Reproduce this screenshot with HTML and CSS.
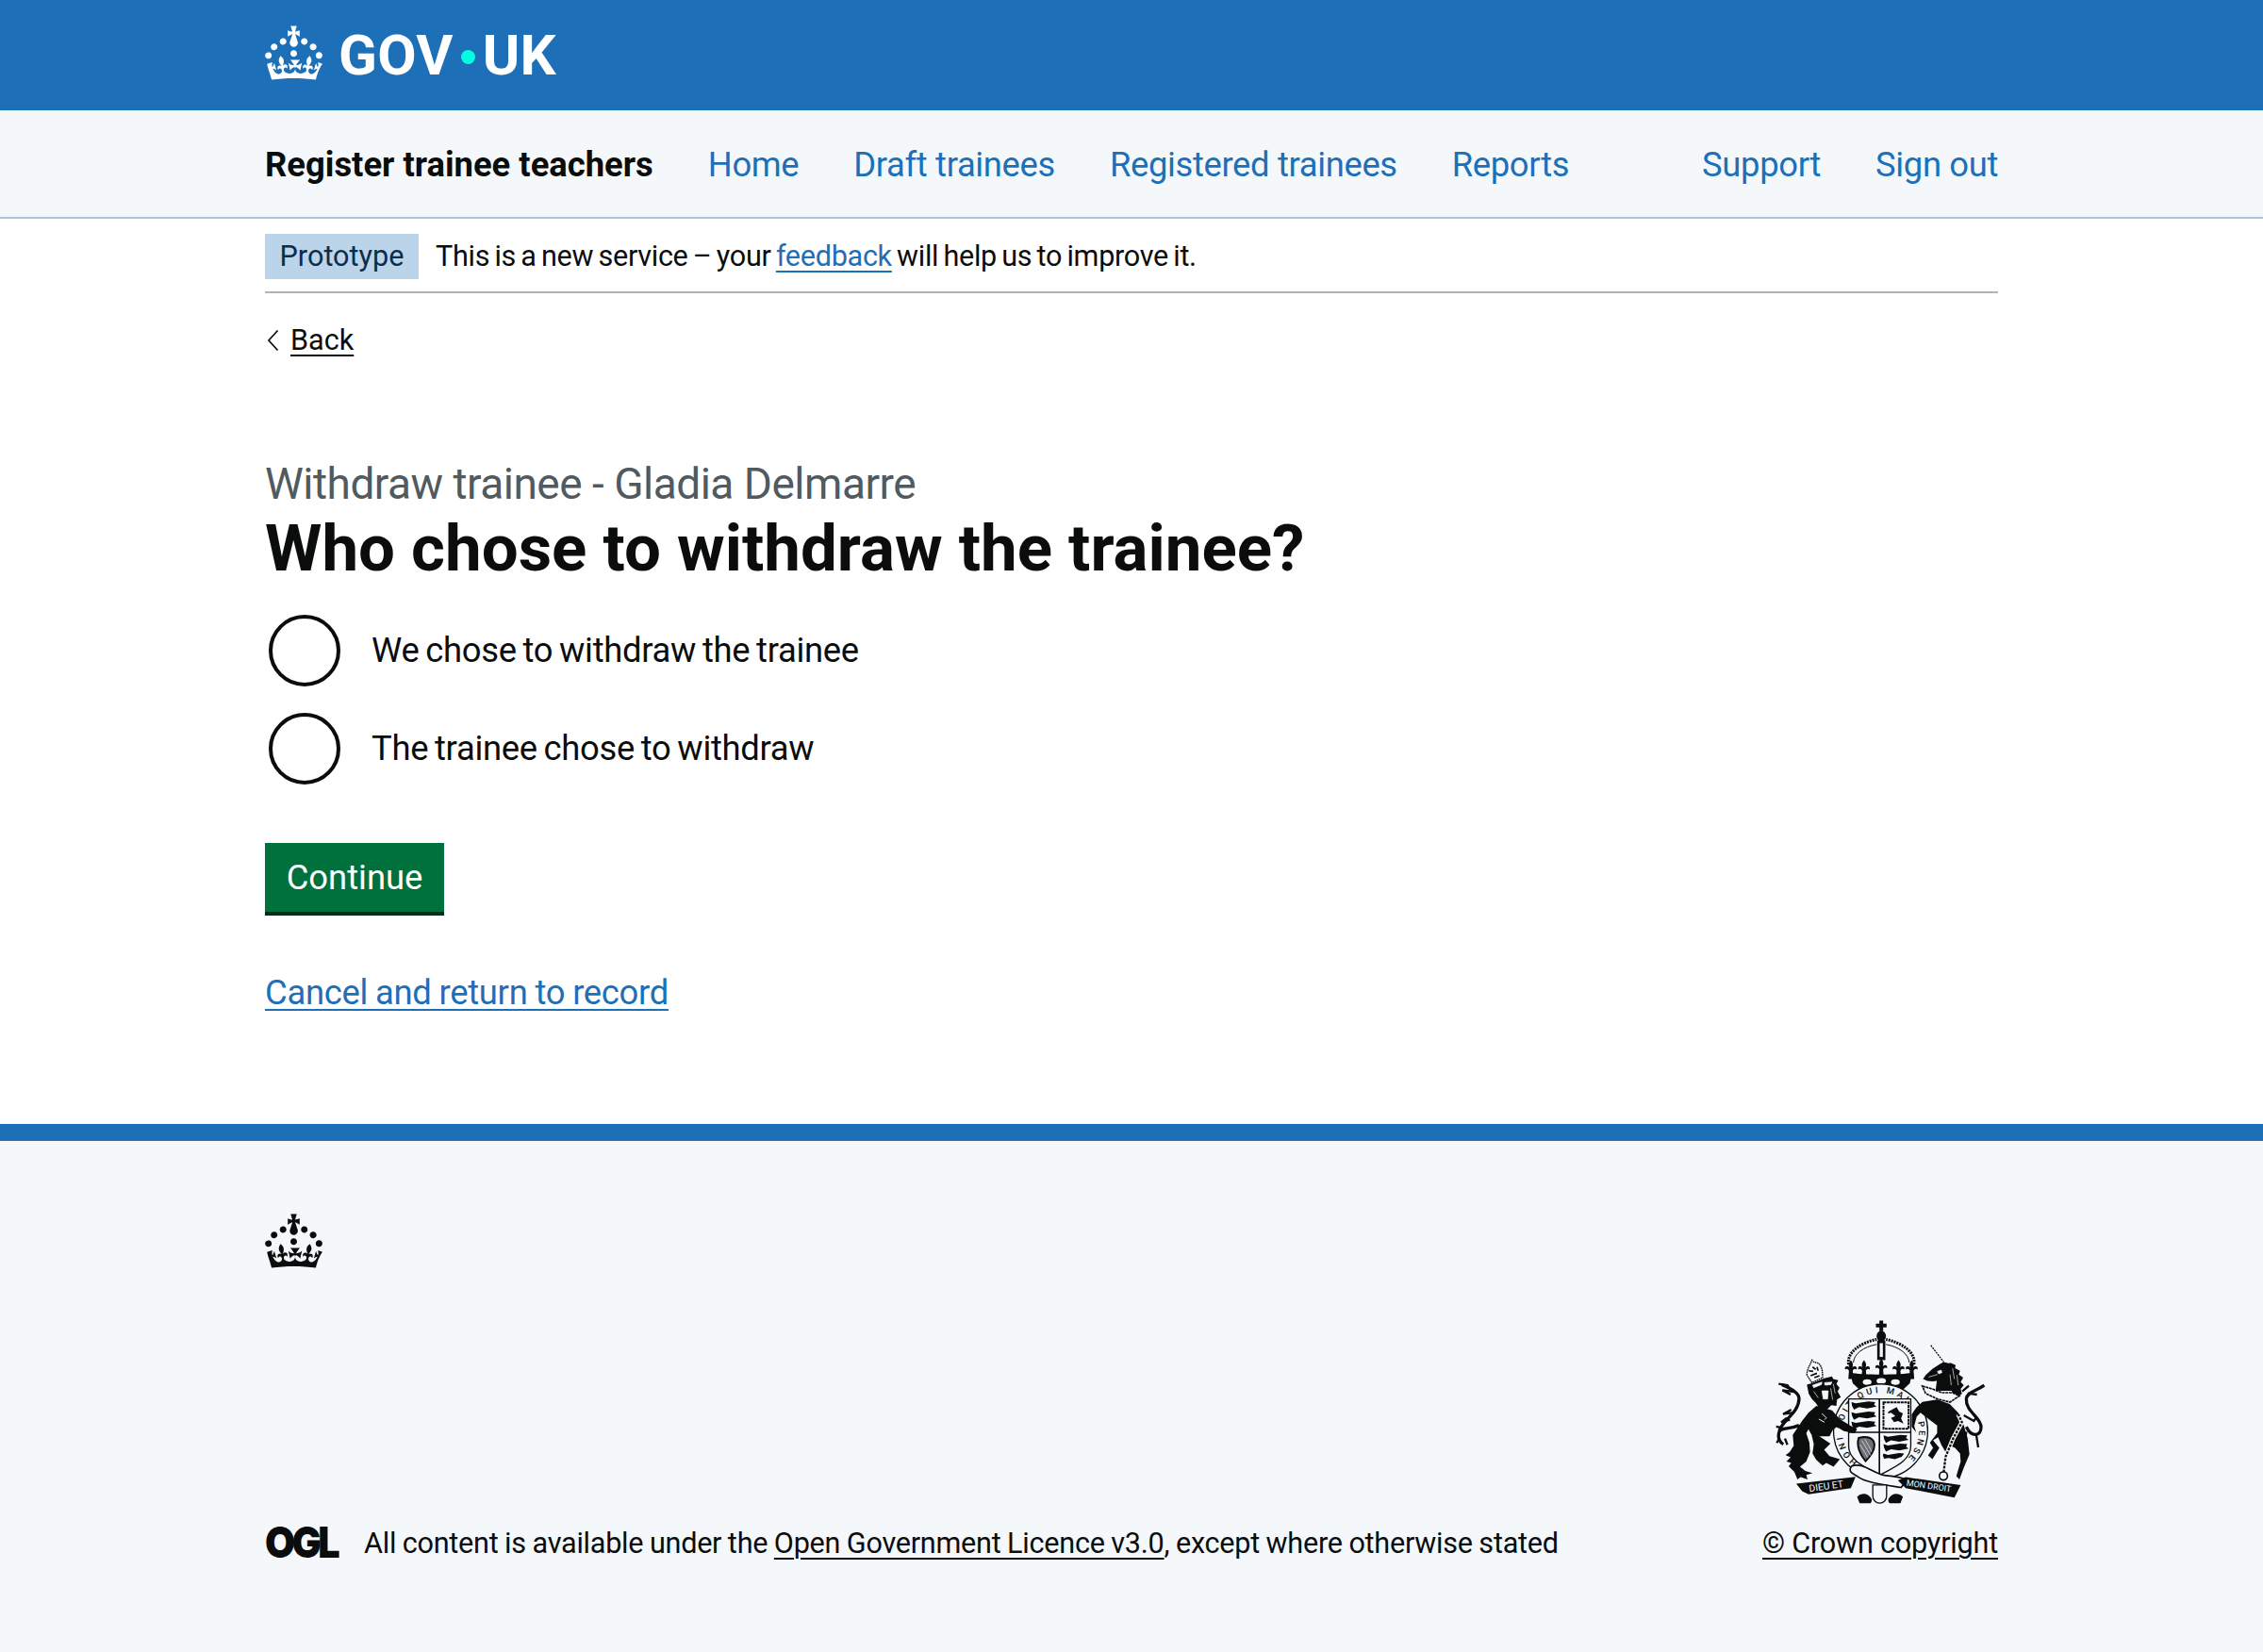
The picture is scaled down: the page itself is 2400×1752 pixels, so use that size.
FILE: index.html
```html
<!DOCTYPE html>
<html lang="en">
<head>
<meta charset="utf-8">
<title>Who chose to withdraw the trainee?</title>
<link rel="stylesheet" href="styles.css">
</head>
<body>
<header class="masthead">
  <div class="wrap masthead-inner">
    <svg class="crown crown-white" viewBox="0 0 32 30" aria-hidden="true"><use href="#crown-path"/></svg>
    <a class="wordmark" href="#">GOV<span class="wordmark-dot"></span>UK</a>
  </div>
</header>
<nav class="service-nav">
  <div class="wrap service-inner">
    <a class="service-name" href="#">Register trainee teachers</a>
    <a class="nav-link" href="#">Home</a>
    <a class="nav-link" href="#">Draft trainees</a>
    <a class="nav-link" href="#">Registered trainees</a>
    <a class="nav-link" href="#">Reports</a>
    <a class="nav-link nav-push" href="#">Support</a>
    <a class="nav-link" href="#">Sign out</a>
  </div>
</nav>
<div class="wrap">
  <div class="phase">
    <strong class="tag">Prototype</strong>
    <span class="phase-text">This is a new service – your <a class="link" href="#">feedback</a> will help us to improve it.</span>
  </div>
  <a class="back" href="#"><svg class="chevron" viewBox="0 0 14 24" aria-hidden="true"><path d="M11.5 1.5 2 12l9.500 10.500" fill="none" stroke="#0b0c0c" stroke-width="1.7"/></svg><span class="back-text">Back</span></a>
  <main class="main">
    <span class="caption">Withdraw trainee - Gladia Delmarre</span>
    <h1 class="title">Who chose to withdraw the trainee?</h1>
    <div class="radios">
      <label class="radio"><span class="radio-ring"></span><span>We chose to withdraw the trainee</span></label>
      <label class="radio"><span class="radio-ring"></span><span>The trainee chose to withdraw</span></label>
    </div>
    <button class="button" type="button">Continue</button>
    <p class="cancel"><a class="link" href="#">Cancel and return to record</a></p>
  </main>
</div>
<footer class="footer">
  <div class="wrap footer-inner">
    <svg class="crown crown-black" viewBox="0 0 32 30" aria-hidden="true"><use href="#crown-path"/></svg>
    <div class="footer-row">
      <div class="licence">
        <span class="ogl">OGL</span>
        <span class="licence-text">All content is available under the <a class="footer-link" href="#">Open Government Licence v3.0</a>, except where otherwise stated</span>
      </div>
      <div class="copyright">
        <svg class="arms" viewBox="70 65 670 585" aria-hidden="true">
          <defs>
            <path id="fleur" d="M0-30C8-20 8-12 4-6 12-14 22-10 18 0 14-4 8-2 6 4L8 30H-8L-6 4C-8-2-14-4-18 0-22-10-12-14-4-6-8-12-8-20 0-30Z"/>
          </defs>
          <!-- royal crown -->
          <path d="M401 66h12v10h11v12h-11v12h-12V88h-11V76h11z" fill="#0b0c0c"/>
          <ellipse cx="407" cy="116" rx="15" ry="18" fill="#0b0c0c"/>
          <path d="M303 206C296 165 345 136 392 126M511 206C518 165 469 136 422 126" fill="none" stroke="#0b0c0c" stroke-width="9" stroke-dasharray="6 3"/>
          <path d="M318 200C320 172 350 150 392 142M496 200C494 172 464 150 422 142" fill="none" stroke="#0b0c0c" stroke-width="3"/>
          <path d="M394 130h26v62h-26z" fill="#0b0c0c"/>
          <path d="M402 138h10v44h-10z" fill="#f4f8fb"/>
          <g fill="#0b0c0c">
            <use href="#fleur" x="352" y="222"/><use href="#fleur" x="462" y="222"/><use href="#fleur" x="407" y="218"/>
            <use href="#fleur" x="310" y="222"/><use href="#fleur" x="504" y="222"/>
            <path d="M308 232C340 240 474 240 506 232L498 266 470 292C430 280 384 280 344 292L316 266Z"/>
          </g>
          <ellipse cx="362" cy="262" rx="14" ry="9" fill="#f4f8fb"/><ellipse cx="407" cy="258" rx="15" ry="9" fill="#f4f8fb"/><ellipse cx="452" cy="262" rx="14" ry="9" fill="#f4f8fb"/>
          <!-- garter -->
          <circle cx="405" cy="418" r="150" fill="#f4f8fb" stroke="#0b0c0c" stroke-width="4"/>
          <path id="garter-curve" d="M332 516A122 122 0 1 1 478 516" fill="none"/>
          <text class="arms-garter"><textPath href="#garter-curve" textLength="590">HONI SOIT QUI MAL Y PENSE</textPath></text>
          <!-- shield -->
          <path d="M303 316h198v150c0 50-60 70-98 92-38-22-100-42-100-92z" fill="#f4f8fb" stroke="#0b0c0c" stroke-width="4"/>
          <path d="M401 316v242M303 422h198" stroke="#0b0c0c" stroke-width="5"/>
          <g fill="#0b0c0c">
            <path d="M312 326l14 4 40-6 22 2-4 8 8 6-30 6-26-4-16 8-6-12zM312 358l14 4 40-6 22 2-4 8 8 6-30 6-26-4-16 8-6-12zM312 388l14 4 40-6 22 2-4 8 8 6-30 6-26-4-16 8-6-12z"/>
            <path d="M414 432l14 4 40-6 22 2-4 8 8 6-30 6-26-4-16 8-6-12zM414 460l14 4 40-6 22 2-4 8 8 6-30 6-26-4-16 8-6-12zM414 490l14 4 36-6 16 2-8 10-22 8-20-4-14 2-4-10z"/>
          </g>
          <path d="M414 327h80v84h-80z" fill="none" stroke="#0b0c0c" stroke-width="6" stroke-dasharray="9 2"/>
          <path d="M430 356l26-14 8 14 12 6-6 16 8 16-18-8-12 4-10-14 14-6-14-10-10 2z" fill="#0b0c0c"/>
          <path d="M335 440c26-8 48 0 50 20 2 24-20 46-28 54-18-20-30-50-22-74z" fill="#6b7075" stroke="#0b0c0c" stroke-width="6"/>
          <path d="M345 448l28 48M355 444l22 40M340 462l24 40" stroke="#f4f8fb" stroke-width="2"/>
          <!-- lion -->
          <g transform="translate(60 180)">
            <path d="M140 158 190 172 215 200 250 222 270 232 262 245 228 238 205 225 192 235 182 255 150 255 185 278 165 298 182 318 215 328 195 352 172 340 160 348 140 330 128 310 132 280 125 250 115 232 108 245 118 275 120 305 108 335 88 352 105 365 128 372 108 378 112 392 90 385 80 392 70 368 52 350 60 340 45 335 58 322 42 315 55 305 68 285 65 250 95 205 115 180Z" fill="#0b0c0c"/>
            <path d="M158 182 172 196 166 202M148 200l18 10" fill="none" stroke="#f4f8fb" stroke-width="3"/>
            <path d="M85 220C50 235 30 225 22 240 15 260 25 275 35 280M22 238C30 205 85 180 85 135 85 115 60 105 30 90" fill="none" stroke="#0b0c0c" stroke-width="10"/>
            <path d="M20 88 48 92 62 112 32 108 58 122M60 170 34 184 62 180M46 196 28 210 56 202M12 224l20 4M22 262l-8 14M40 262l8 20" fill="none" stroke="#0b0c0c" stroke-width="7"/>
            <path d="M110 90 130 84 165 70 190 64 194 72 210 76 204 88 214 100 208 112 218 130 206 138 204 158 188 156 176 168 150 166 138 148 126 136 116 120Z" fill="#0b0c0c"/>
            <path d="M110 60C110 38 120 30 126 12 134 24 146 16 152 28 160 40 160 54 160 68L126 84Z" fill="#f4f8fb" stroke="#0b0c0c" stroke-width="4" stroke-dasharray="5 2"/>
            <path d="M116 46l14 2M128 34l10 8M142 34l4 12M122 62l20-8M134 68l16-6" stroke="#0b0c0c" stroke-width="5"/>
            <path d="M128 92l30-10-2 8-24 10zM158 110h20l-2 26h-14zM166 84l24-2-4 8-18 2zM194 88l6 30M186 102l6 36M132 112l14 20" fill="#f4f8fb" stroke="#f4f8fb" stroke-width="2"/>
          </g>
          <!-- unicorn -->
          <g transform="translate(420 120)">
            <path d="M118 205 165 198 205 212 232 240 250 280 262 320 268 372 250 415 236 452 226 442 240 395 238 370 222 352 206 345 198 375 180 345 168 318 152 328 172 352 150 388 136 376 152 352 142 335 165 305 165 280 135 258 112 240 100 252 92 282 98 302 84 285 84 245 98 224Z" fill="#0b0c0c"/>
            <path d="M120 132 128 120 150 100 172 86 185 78 215 85 228 120 216 170 160 170 164 138 150 140 134 138Z" fill="#0b0c0c"/>
            <path d="M205 80 224 88 222 98 238 106 234 118 248 128 240 142 250 152 240 164 244 180 226 192 212 174Z" fill="#0b0c0c"/>
            <path d="M145 25 186 78" fill="none" stroke="#0b0c0c" stroke-width="4" stroke-dasharray="6 3"/>
            <path d="M118 155 150 164 180 176 214 176 236 186 206 206 166 196 128 178Z" fill="#f4f8fb" stroke="#0b0c0c" stroke-width="5" stroke-dasharray="9 2"/>
            <path d="M166 108l12-4 2 8-10 4zM138 126l28-8M214 98l6 34M206 118l4 34M228 120l4 32" fill="#f4f8fb" stroke="#f4f8fb" stroke-width="2"/>
            <path d="M232 244 244 270 216 322 192 380 186 428" fill="none" stroke="#f4f8fb" stroke-width="14"/>
            <path d="M232 244 244 270 216 322 192 380 186 428" fill="none" stroke="#0b0c0c" stroke-width="7" stroke-dasharray="8 4"/>
            <circle cx="185" cy="441" r="13" fill="none" stroke="#0b0c0c" stroke-width="5"/>
            <path d="M258 285C275 320 305 315 305 285 305 255 255 235 258 195 260 175 290 170 315 152" fill="none" stroke="#0b0c0c" stroke-width="10"/>
            <path d="M245 172 266 154M292 182 262 178M250 248 282 266 292 252M296 350 290 312M258 300l-4 26" fill="none" stroke="#0b0c0c" stroke-width="7"/>
          </g>
          <!-- motto -->
          <path d="M312 530c40-14 70 26 110 30 24 2 50 6 68 14l-20 24c-50-8-110-14-140-36-14-8-30-14-18-32z" fill="#f4f8fb" stroke="#0b0c0c" stroke-width="5"/>
          <path d="M136 586 325 564 310 600 175 620 155 610Z" fill="#0b0c0c"/>
          <path d="M460 575 485 565 660 590 640 630 485 600Z" fill="#0b0c0c"/>
          <text class="arms-motto" transform="translate(178 612) rotate(-8)">DIEU ET</text>
          <text class="arms-motto arms-motto-right" transform="translate(486 592) rotate(8)">MON DROIT</text>
          <path d="M380 590h44v36c0 12-10 22-22 22s-22-10-22-22z" fill="#f4f8fb" stroke="#0b0c0c" stroke-width="4"/>
          <path d="M330 628c14-14 34-14 46 6 2 6 0 12-4 14h-34zM430 634c12-20 32-20 46-6l-8 20h-34c-4-2-6-8-4-14z" fill="#0b0c0c"/>
        </svg>
        <a class="footer-link copyright-link" href="#">© Crown copyright</a>
      </div>
    </div>
  </div>
</footer>
<svg class="defs" aria-hidden="true"><defs>
  <path id="crown-path" d="M22.6 10.4c-1 .4-2-.1-2.4-1-.4-.9.1-2 1-2.4.9-.4 2-.1 2.4 1s-.1 2-1 2.4m-5.9 6.7c-.9.4-2 0-2.4-1-.4-.9.1-2 1-2.4.9-.4 2-.1 2.4 1s-.1 2-1 2.4m10.8-3.7c-1 .4-2 0-2.4-1-.4-.9 0-2 1-2.4s2 0 2.4 1c.5 1-.1 2-1 2.4m3.3 4.8c-1 .4-2-.1-2.4-1-.4-.9.1-2 1-2.4.9-.4 2-.1 2.4 1 .4.9-.1 2-1 2.4M17 4.7l2.3 1.2V2.5l-2.3.7-.2-.2.9-3h-3.4l.9 3-.2.2c-.1.1-2.3-.7-2.3-.7v3.4L15 4.7c.1.1.1.2.2.2l-1.3 4c-.1.2-.1.4-.1.6 0 1.1.8 2 1.9 2.2h.7c1-.2 1.9-1.1 1.9-2.2 0-.2 0-.4-.1-.6l-1.3-4c-.1-.1 0-.2.1-.2m-7.6 5.7c.9.4 2-.1 2.4-1 .4-.9-.1-2-1-2.4-.9-.4-2-.1-2.4 1s0 2 1 2.4m-5 3c.9.4 2-.1 2.4-1 .4-.9-.1-2-1-2.4-.9-.4-2 .1-2.4 1-.4.9 0 2 1 2.4m-3.2 4.8c.9.4 2-.1 2.4-1 .4-1-.1-2-1-2.4-.9-.3-2 .1-2.4 1-.4 1 .1 2 1 2.4m14.8 11c4.4 0 8.6.3 12.3.8 1.1-4.5 2.4-7 3.7-8.8l-2.5-.9c.2 1.3.3 1.9 0 2.7-.4-.4-.8-1.1-1.1-2.3l-1.2 4c.7-.5 1.3-.8 2-.9-1.1 2.5-2.6 3.1-3.5 3-1.1-.2-1.7-1.2-1.5-2.1.3-1.2 1.5-1.5 2.1-.1 1.1-2.3-.8-3-2-2.3 1.9-1.9 2.1-3.5.6-5.6-2.1 1.6-2.1 3.2-1.2 5.5-1.2-1.4-3.2-.6-2.5 1.6.9-1.4 2.1-.5 1.9.8-.2 1.1-1.7 2.1-3.5 1.9-2.7-.2-2.9-2.1-2.9-3.6.7-.1 1.9.5 2.9 1.9l1-4.3c-1.1 1.1-2.1 1.4-3.2 1.4.4-1.2 2.1-3 2.1-3h-5.4s1.7 1.9 2.1 3c-1.1 0-2.1-.2-3.2-1.4l1 4.3c1-1.4 2.2-2 2.9-1.9-.1 1.5-.2 3.4-2.9 3.6-1.9.2-3.4-.8-3.5-1.9-.2-1.3 1-2.2 1.9-.8.7-2.3-1.2-3-2.5-1.6.9-2.2.9-3.9-1.2-5.5-1.5 2-1.3 3.7.6 5.6-1.2-.7-3.1 0-2 2.3.6-1.4 1.8-1.1 2.1.1.2.9-.3 1.9-1.5 2.1-.9.2-2.4-.5-3.5-3 .6 0 1.2.3 2 .9l-1.2-4c-.3 1.1-.7 1.9-1.1 2.3-.3-.8-.2-1.4 0-2.7l-2.9.9C1.3 23 2.6 25.5 3.7 30c3.7-.5 7.9-.8 12.3-.8"/>
</defs></svg>
</body>
</html>
```
FILE: styles.css
```css
* { box-sizing: border-box; }
html, body { margin: 0; padding: 0; }
body {
  font-family: Roboto, "Liberation Sans", sans-serif;
  color: #0b0c0c;
  background: #fff;
  font-size: 36.4px;
  line-height: 48px;
  min-height: 1752px;
}
a { color: inherit; }
.defs { display: none; }
.wrap { width: 1838px; margin: 0 auto; }

.masthead { background: #1d70b8; height: 117px; }
.masthead-inner { display: flex; align-items: center; height: 117px; }
.crown { width: 61px; height: 58px; display: block; fill: currentColor; flex: none; }
.crown-white { color: #fff; margin-top: -6px; }
.crown-black { color: #0b0c0c; }
.wordmark {
  margin-left: 17px; color: #fff; text-decoration: none; font-weight: 700;
  font-size: 60px; line-height: 60px; letter-spacing: 0.3px; display: flex; align-items: center;
}
.wordmark-dot { width: 15px; height: 15px; border-radius: 50%; background: #00ffe0; margin: 4px 8px 0; }

.service-nav { background: #f4f8fb; height: 115px; border-bottom: 2px solid #a5c6e3; }
.service-inner { display: flex; align-items: center; height: 113px; padding-top: 2px; gap: 58px; }
.service-name { font-weight: 700; text-decoration: none; }
.nav-link { color: #1d70b8; text-decoration: none; letter-spacing: -0.35px; }
.nav-push { margin-left: auto; }

.phase { display: flex; align-items: center; gap: 18px; height: 79px; padding-top: 2px; border-bottom: 2px solid #b1b4b6; }
.tag { background: #bbd4ea; color: #0c2d4a; font-weight: 400; height: 48px; width: 163px; display: flex; align-items: center; justify-content: center; font-size: 30.6px; }
.phase-text { font-size: 30.6px; letter-spacing: -0.3px; word-spacing: -2px; }
.link { color: #1d70b8; text-decoration: underline; text-decoration-thickness: 2px; text-underline-offset: 5px; }

.back { display: inline-flex; align-items: center; gap: 11px; margin-top: 26px; text-decoration: none; font-size: 30.6px; }
.chevron { width: 14px; height: 24px; margin-left: 2px; }
.back-text { text-decoration: underline; text-decoration-thickness: 2px; text-underline-offset: 5px; }

.main { display: flex; flex-direction: column; align-items: flex-start; padding-top: 100px; }
.caption { color: #505a5f; font-size: 46px; line-height: 56px; letter-spacing: -0.5px; }
.title { margin: 2px 0 0; font-size: 69px; line-height: 78px; font-weight: 700; }

.radios { display: flex; flex-direction: column; gap: 28px; margin-top: 31px; }
.radio { display: flex; align-items: center; gap: 33px; height: 76px; padding-left: 4px; letter-spacing: -0.3px; word-spacing: -1.9px; }
.radio-ring { width: 76px; height: 76px; border: 4px solid #0b0c0c; border-radius: 50%; background: #fff; flex: none; }

.button {
  margin-top: 62px; width: 190px; height: 77px; background: #00703c; color: #fff; border: 0;
  border-bottom: 4px solid #002d18; font: inherit; padding: 0;
}
.cancel { margin: 58px 0 0; letter-spacing: -0.3px; word-spacing: -0.7px; }

.footer { background: #f4f8fb; border-top: 18px solid #1d70b8; height: 560px; position: absolute; top: 1192px; left: 0; right: 0; }
.footer-inner { display: flex; flex-direction: column; padding-top: 77px; }
.footer-row { display: flex; justify-content: space-between; align-items: flex-end; margin-top: 55px; font-size: 30.6px; }
.licence { display: flex; align-items: center; gap: 26px; }
.licence-text { letter-spacing: -0.25px; word-spacing: -0.7px; }
.ogl { width: 79px; margin-top: -4px; flex: none; font-family: Inter, "Liberation Sans", sans-serif; font-weight: 900; font-size: 46px; line-height: 48px; letter-spacing: -4px; transform: scaleX(.9); transform-origin: left center; }
.copyright { display: flex; flex-direction: column; align-items: center; gap: 18px; }
.copyright-link { letter-spacing: -0.2px; }
.arms { width: 223px; height: 195px; display: block; }
.arms-garter { font-size: 28px; font-weight: 500; fill: #0b0c0c; }
.arms-motto { font-size: 31px; fill: #f4f8fb; }
.arms-motto-right { font-size: 27px; }
.footer-link { text-decoration: underline; text-decoration-thickness: 2px; text-underline-offset: 5px; }
```
